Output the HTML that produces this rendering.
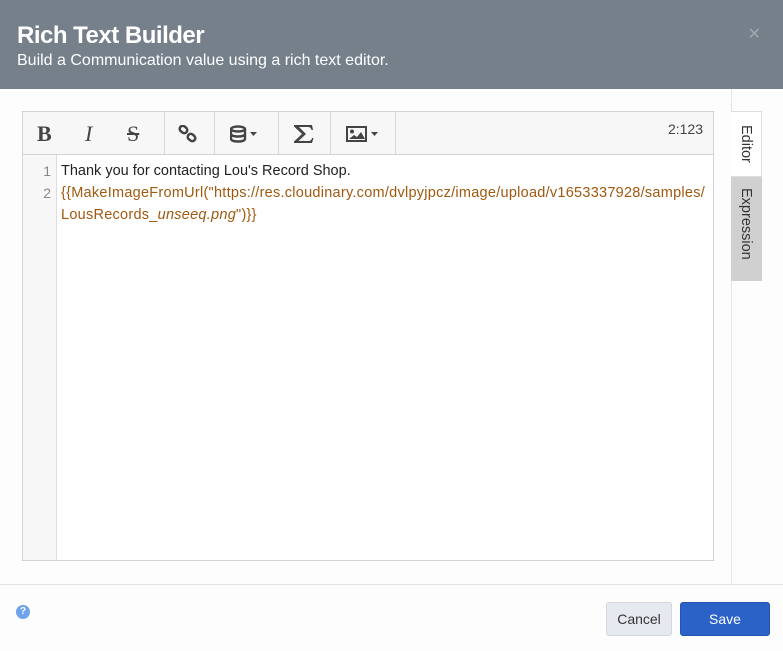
<!DOCTYPE html>
<html><head><style>
*{margin:0;padding:0;box-sizing:border-box}
body{width:783px;height:651px;background:#fdfdfd;font-family:"Liberation Sans",sans-serif;position:relative;overflow:hidden}
.hdr{position:absolute;left:0;top:0;width:783px;height:89px;background:#75808b;color:#fff}
.hdr h1{position:absolute;left:17px;top:22px;font-size:24px;font-weight:bold;letter-spacing:-0.5px}
.hdr p{position:absolute;left:17px;top:52px;font-size:16px}
.x{position:absolute;right:22px;top:24px;color:#a0a8b0;font-size:16px}
.ed{position:absolute;left:22px;top:111px;width:692px;height:450px;border:1px solid #d4d4d4;background:#fff}
.tb{height:43px;background:#f7f7f7;border-bottom:1px solid #d4d4d4;position:relative}
.sep{position:absolute;top:0;width:1px;height:42px;background:#d8d8d8}
.ic{position:absolute;top:9px;font-size:22px;color:#444}
.pos{position:absolute;right:10px;top:9px;font-size:14px;color:#444}
.gut{position:absolute;left:0;top:43px;width:34px;bottom:0;background:#f7f7f7;border-right:1px solid #ddd;color:#888;font-size:14px;text-align:right;padding-right:5px}
.code{position:absolute;left:38px;top:48px;font-size:14.5px;line-height:22px;color:#222;white-space:nowrap}
.o{color:#a0590f;letter-spacing:0.26px}
.rl{position:absolute;left:731px;top:89px;width:1px;height:495px;background:#e4e4e4}
.t1{position:absolute;left:731px;top:111px;width:31px;height:66px;background:#fff;border:1px solid #ddd;border-left:none}
.t2{position:absolute;left:731px;top:177px;width:31px;height:104px;background:#d0d0d0}
.vt{position:absolute;writing-mode:vertical-rl;font-size:14.5px;color:#333;left:7px}
.ft{position:absolute;left:0;top:584px;width:783px;height:1px;background:#e4e4e4}
.help{position:absolute;left:16px;top:605px;width:14px;height:14px;border-radius:50%;background:#6fa3ee;color:#fff;font-size:10px;font-weight:bold;text-align:center;line-height:14px}
.btn{position:absolute;top:602px;height:34px;border-radius:3px;font-size:14px;text-align:center;line-height:32px}
</style></head><body>
<div class="hdr"><h1>Rich Text Builder</h1><p>Build a Communication value using a rich text editor.</p><div class="x">✕</div></div>
<div class="ed">
<div class="tb">
<span class="ic" style="left:14px;font-family:'Liberation Serif';font-weight:bold">B</span>
<span class="ic" style="left:62px;font-family:'Liberation Serif';font-style:italic">I</span>
<span class="ic" style="left:104px;font-family:'Liberation Serif';text-decoration:line-through">S</span>
<div class="sep" style="left:141px"></div>
<svg style="position:absolute;left:155px;top:13px" width="20" height="18" viewBox="0 0 20 18"><g fill="none" stroke="#444" stroke-width="2.5"><rect x="1.5" y="1.5" width="8" height="6" rx="3" transform="rotate(40 5.5 4.5)"/><rect x="9.5" y="9.5" width="8" height="6" rx="3" transform="rotate(40 13.5 12.5)"/></g></svg>
<div class="sep" style="left:191px"></div>
<svg style="position:absolute;left:207px;top:13px" width="34" height="18" viewBox="0 0 34 18"><g fill="none" stroke="#444" stroke-width="2.4"><ellipse cx="8" cy="4" rx="7" ry="2.5"/><path d="M1 4v10c0 1.5 3 2.5 7 2.5s7-1 7-2.5V4M1 9c0 1.5 3 2.5 7 2.5s7-1 7-2.5"/></g><path d="M20 7h7l-3.5 4z" fill="#444"/></svg>
<div class="sep" style="left:255px"></div>
<svg style="position:absolute;left:270px;top:12px" width="21" height="20" viewBox="0 0 21 20"><path d="M1 1h18l1 5h-1.5c-.5-2-1.5-3-4-3H6l7 7-7.5 7H15c2.5 0 3.5-1 4-3h1.5L19 19H1v-1.5L9 10 1 2.5z" fill="#444"/></svg>
<div class="sep" style="left:307px"></div>
<svg style="position:absolute;left:323px;top:14px" width="34" height="16" viewBox="0 0 34 16"><rect x="1" y="1" width="19" height="14" fill="none" stroke="#444" stroke-width="2"/><circle cx="6" cy="5.5" r="2" fill="#444"/><path d="M3 13l5-4 3 2 4-5 4 7z" fill="#444"/><path d="M25 6h7l-3.5 4z" fill="#444"/></svg>
<div class="sep" style="left:372px"></div>
<span class="pos">2:123</span>
</div>
<div class="gut"><div style="margin-top:5px;line-height:22px">1<br>2</div></div>
<div class="code">Thank you for contacting Lou's Record Shop.<br><span class="o">{{MakeImageFromUrl("https://res.cloudinary.com/dvlpyjpcz/image/upload/v1653337928/samples/<br>LousRecords_<i>unseeq.png</i>")}}</span></div>
</div>
<div class="rl"></div>
<div class="t1"><span class="vt" style="top:13px">Editor</span></div>
<div class="t2"><span class="vt" style="top:11px">Expression</span></div>
<div class="ft"></div>
<div class="help">?</div>
<div class="btn" style="left:606px;width:66px;background:#e6eaf0;border:1px solid #d4d8de;color:#333">Cancel</div>
<div class="btn" style="left:680px;width:90px;background:#2a62c8;border:1px solid #2456b0;color:#fff">Save</div>
</body></html>
